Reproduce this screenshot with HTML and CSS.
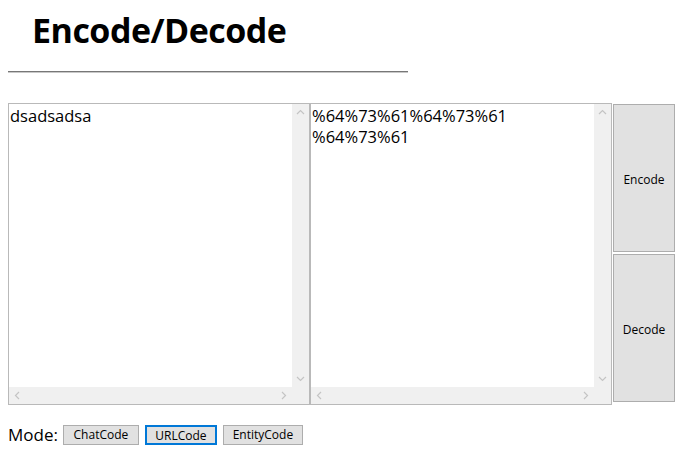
FILE: index.html
```html
<!DOCTYPE html>
<html>
<head>
<meta charset="utf-8">
<link rel="stylesheet" href="styles.css">
</head>
<body>
<h1 class="title">Encode/Decode</h1>
<hr class="rule">
<div class="workspace">
  <div class="box">
    <textarea class="text">dsadsadsa</textarea>
    <div class="vbar">
      <svg width="17" height="17" viewBox="0 0 17 17"><path d="M5 10 L8.5 6.5 L12 10" fill="none" stroke="#c4c4c4" stroke-width="1.2"/></svg>
      <svg width="17" height="17" viewBox="0 0 17 17"><path d="M5 7 L8.5 10.5 L12 7" fill="none" stroke="#c4c4c4" stroke-width="1.2"/></svg>
    </div>
    <div class="hbar">
      <svg width="17" height="17" viewBox="0 0 17 17"><path d="M10 5 L6.5 8.5 L10 12" fill="none" stroke="#c4c4c4" stroke-width="1.2"/></svg>
      <svg width="17" height="17" viewBox="0 0 17 17"><path d="M7 5 L10.5 8.5 L7 12" fill="none" stroke="#c4c4c4" stroke-width="1.2"/></svg>
    </div>
    <div class="corner"></div>
  </div>
  <div class="box">
    <textarea class="text">%64%73%61%64%73%61
%64%73%61</textarea>
    <div class="vbar">
      <svg width="17" height="17" viewBox="0 0 17 17"><path d="M5 10 L8.5 6.5 L12 10" fill="none" stroke="#c4c4c4" stroke-width="1.2"/></svg>
      <svg width="17" height="17" viewBox="0 0 17 17"><path d="M5 7 L8.5 10.5 L12 7" fill="none" stroke="#c4c4c4" stroke-width="1.2"/></svg>
    </div>
    <div class="hbar">
      <svg width="17" height="17" viewBox="0 0 17 17"><path d="M10 5 L6.5 8.5 L10 12" fill="none" stroke="#c4c4c4" stroke-width="1.2"/></svg>
      <svg width="17" height="17" viewBox="0 0 17 17"><path d="M7 5 L10.5 8.5 L7 12" fill="none" stroke="#c4c4c4" stroke-width="1.2"/></svg>
    </div>
    <div class="corner"></div>
  </div>
  <div class="actions">
    <button class="big-btn">Encode</button>
    <button class="big-btn">Decode</button>
  </div>
</div>
<div class="mode-row">
  <span class="mode-label">Mode:</span>
  <button class="mode-btn w-chat">ChatCode</button>
  <button class="mode-btn w-url active">URLCode</button>
  <button class="mode-btn w-entity">EntityCode</button>
</div>
</body>
</html>
```
FILE: styles.css
```css
body {
  margin: 8px;
  font-family: "Open Sans", "Noto Sans", sans-serif;
  color: #000;
  background: #fff;
}
.title {
  margin: 0;
  padding: 0 0 0 24px;
  height: 60px;
  font-size: 34px;
  line-height: 44px;
  font-weight: bold;
  letter-spacing: -0.5px;
}
.rule {
  margin: 3px 0 0 0;
  width: 400px;
  border: 0;
  border-top: 1px solid #777;
  border-bottom: 1px solid #c8c8c8;
  height: 0;
}
.workspace {
  display: flex;
  align-items: flex-start;
  margin-top: 30px;
}
.box {
  display: grid;
  grid-template-columns: 283px 17px;
  grid-template-rows: 283px 17px;
  border: 1px solid #b9b9b9;
  background: #fff;
}
.text {
  border: 0;
  margin: 0;
  padding: 1px 1px;
  resize: none;
  overflow: hidden;
  font-family: "Open Sans", "Noto Sans", sans-serif;
  font-size: 16.5px;
  line-height: 21px;
  color: #000;
  outline: none;
  width: 283px;
  height: 283px;
  box-sizing: border-box;
}
.vbar {
  background: #f0f0f0;
  display: flex;
  flex-direction: column;
  justify-content: space-between;
}
.hbar {
  background: #f0f0f0;
  display: flex;
  justify-content: space-between;
}
.vbar svg, .hbar svg { display: block; }
.corner { background: #f0f0f0; }
.actions {
  display: flex;
  flex-direction: column;
  gap: 2px;
  margin: 1px 0 0 1px;
}
.big-btn {
  width: 62px;
  height: 148px;
  margin: 0;
  padding: 3px 0 0 0;
  border: 1px solid #adadad;
  background: #e1e1e1;
  font-family: "Open Sans", "Noto Sans", sans-serif;
  font-size: 12px;
  color: #000;
}
.mode-row {
  display: flex;
  align-items: center;
  margin-top: 18px;
  gap: 6px;
}
.mode-label {
  font-size: 17px;
  line-height: 24px;
  margin-right: -1px;
}
.mode-btn {
  height: 20px;
  margin: 0;
  padding: 0;
  border: 1px solid #adadad;
  background: #e1e1e1;
  font-family: "Open Sans", "Noto Sans", sans-serif;
  font-size: 12px;
  line-height: 18px;
  color: #000;
}
.mode-btn.active {
  border: 2px solid #0078d7;
}
.w-chat { width: 76px; }
.w-url { width: 72px; }
.w-entity { width: 80px; }
```
